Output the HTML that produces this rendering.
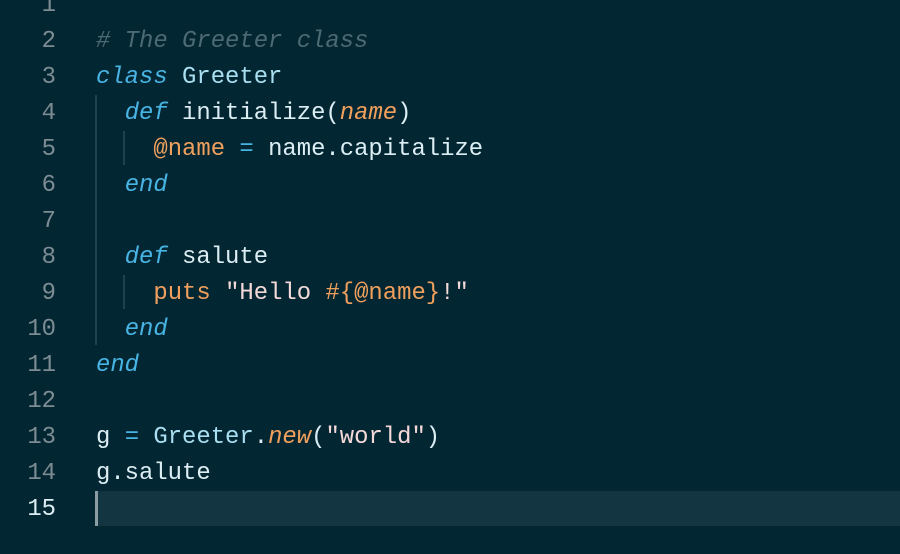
<!DOCTYPE html>
<html><head><style>
body{margin:0;width:900px;height:554px;background:#032633;overflow:hidden;font-family:"Liberation Mono","DejaVu Sans Mono",monospace;font-size:23.9px;}
.l{position:absolute;left:0;height:36px;line-height:36px;white-space:pre;width:900px;}
.n{position:absolute;left:0;width:56px;text-align:right;color:#7d8d93;}
.c{position:absolute;left:96px;color:#dceef3;}
.k{color:#48b4e3;font-style:italic}
.cm{color:#4c6a73;font-style:italic}
.o{color:#f0a05c}
.oi{color:#f0a05c;font-style:italic}
.s{color:#f4d9d9}
.e{color:#48b4e3}
.t{color:#a9dff0}
.g{position:absolute;width:2px;background:#1e4350;}
</style></head><body>
<div style="position:absolute;left:96px;top:491px;width:804px;height:35px;background:#133542"></div>
<div style="position:absolute;left:95px;top:491px;width:3px;height:35px;background:#8b9ca2"></div>
<div class="g" style="left:95px;top:95px;height:250px"></div>
<div class="g" style="left:123px;top:131px;height:34px"></div>
<div class="g" style="left:123px;top:275px;height:34px"></div>
<div class="l" style="top:-12px"><span class="n">1</span></div>
<div class="l" style="top:24px"><span class="n">2</span><span class="c cm"># The Greeter class</span></div>
<div class="l" style="top:60px"><span class="n">3</span><span class="c"><span class="k">class</span> <span class="t">Greeter</span></span></div>
<div class="l" style="top:96px"><span class="n">4</span><span class="c">  <span class="k">def</span> initialize(<span class="oi">name</span>)</span></div>
<div class="l" style="top:132px"><span class="n">5</span><span class="c">    <span class="o">@name</span> <span class="e">=</span> name.capitalize</span></div>
<div class="l" style="top:168px"><span class="n">6</span><span class="c">  <span class="k">end</span></span></div>
<div class="l" style="top:204px"><span class="n">7</span></div>
<div class="l" style="top:240px"><span class="n">8</span><span class="c">  <span class="k">def</span> salute</span></div>
<div class="l" style="top:276px"><span class="n">9</span><span class="c">    <span class="o">puts</span> <span class="s">"Hello </span><span class="o">#{@name}</span><span class="s">!"</span></span></div>
<div class="l" style="top:312px"><span class="n">10</span><span class="c">  <span class="k">end</span></span></div>
<div class="l" style="top:348px"><span class="n">11</span><span class="c"><span class="k">end</span></span></div>
<div class="l" style="top:384px"><span class="n">12</span></div>
<div class="l" style="top:420px"><span class="n">13</span><span class="c">g <span class="e">=</span> <span class="t">Greeter</span>.<span class="oi">new</span>(<span class="s">"world"</span>)</span></div>
<div class="l" style="top:456px"><span class="n">14</span><span class="c">g.salute</span></div>
<div class="l" style="top:492px"><span class="n" style="color:#dceef3">15</span></div>
</body></html>
